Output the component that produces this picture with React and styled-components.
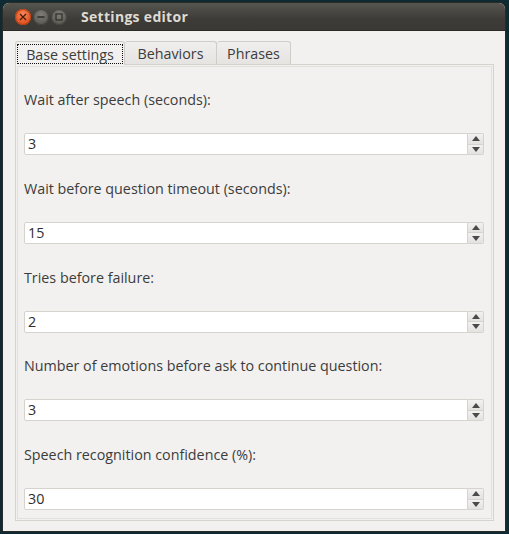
import styled, { createGlobalStyle } from "styled-components";

const GlobalStyle = createGlobalStyle`
  html, body {
    margin: 0;
    padding: 0;
    background: #0f2a32;
  }
  body {
    font-family: "Open Sans", "DejaVu Sans", sans-serif;
  }
`;

const Desktop = styled.div`
  width: 509px;
  height: 534px;
  padding: 3px 4px 0 3px;
  box-sizing: border-box;
`;

const Window = styled.div`
  width: 502px;
  height: 528px;
  display: flex;
  flex-direction: column;
  background: #f2f1f0;
  border-radius: 6px 6px 0 0;
  overflow: hidden;
  box-shadow: 0 0 0 1px #2a2a27;
`;

const TitleBar = styled.div`
  height: 27px;
  flex: none;
  display: flex;
  align-items: center;
  padding-left: 12px;
  background: linear-gradient(#57554f, #3c3b37 60%, #3a3935);
  border-bottom: 1px solid #2c2b28;
`;

const Controls = styled.div`
  display: flex;
  gap: 2px;
  margin-right: 14px;
`;

const ControlButton = styled.div`
  width: 16px;
  height: 16px;
  border-radius: 50%;
  display: flex;
  align-items: center;
  justify-content: center;
  background: ${(p) =>
    p.$close
      ? "radial-gradient(circle at 50% 35%, #f78a5c, #e0501f 70%)"
      : "radial-gradient(circle at 50% 35%, #807d76, #5d5b55 70%)"};
  box-shadow: inset 0 0 0 1px ${(p) => (p.$close ? "#b84215" : "#44423e")};
`;

const Title = styled.span`
  color: #dfdbd2;
  font-size: 14px;
  font-weight: bold;
  letter-spacing: 0.3px;
`;

const Body = styled.div`
  flex: 1;
  display: flex;
  flex-direction: column;
  padding: 10px 11px 10px 12px;
`;

const TabBar = styled.div`
  display: flex;
  height: 23px;
  position: relative;
  z-index: 1;
`;

const Tab = styled.div`
  box-sizing: border-box;
  display: flex;
  align-items: center;
  justify-content: center;
  width: ${(p) => p.$width}px;
  font-size: 14.3px;
  color: #3c3c3c;
  border: 1px solid #d0cdc8;
  border-bottom: none;
  border-left: ${(p) => (p.$first ? "1px solid #d0cdc8" : "none")};
  border-radius: 3px 3px 0 0;
  background: ${(p) =>
    p.$active ? "#f2f1f0" : "linear-gradient(#f0efed, #e6e4e1)"};
  height: ${(p) => (p.$active ? "24px" : "23px")};
`;

const FocusLabel = styled.span`
  flex: 1;
  align-self: stretch;
  margin: 2px 1px 1px 1px;
  border: 1px dotted #111;
  display: flex;
  align-items: center;
  justify-content: center;
`;

const Panel = styled.div`
  flex: 1;
  border: 1px solid #d6d3ce;
  padding: 1px;
  display: flex;
  width: 479px;
  box-sizing: border-box;
`;

const PanelInner = styled.div`
  flex: 1;
  border: 1px solid #e2e0dc;
  display: flex;
  flex-direction: column;
  gap: 23.75px;
  padding: 23px 6px 0 6px;
`;

const Field = styled.div`
  display: flex;
  flex-direction: column;
`;

const Label = styled.div`
  font-size: 14.3px;
  color: #3c3c3c;
  line-height: 20px;
  height: 20px;
  margin-bottom: 23px;
`;

const SpinBox = styled.div`
  display: flex;
  height: 22px;
  width: 460px;
`;

const Input = styled.div`
  flex: 1;
  box-sizing: border-box;
  background: #fff;
  border: 1px solid #d6d3ce;
  border-radius: 2px 0 0 2px;
  font-size: 14.3px;
  color: #2e2e2e;
  padding-left: 3px;
  line-height: 20px;
`;

const Spinner = styled.div`
  width: 16px;
  display: flex;
  flex-direction: column;
  border: 1px solid #d6d3ce;
  border-left: none;
  box-sizing: border-box;
  border-radius: 0 2px 2px 0;
  overflow: hidden;
`;

const SpinButton = styled.div`
  flex: 1;
  display: flex;
  align-items: center;
  justify-content: center;
  background: linear-gradient(#f2f1f0, #e4e2df);
  border-top: ${(p) => (p.$down ? "1px solid #d6d3ce" : "none")};
`;

const Arrow = ({ down }) => (
  <svg width="8" height="5" viewBox="0 0 8 5">
    <path d={down ? "M0 0H8L4 5Z" : "M0 5H8L4 0Z"} fill="#4a4a4a" />
  </svg>
);

const fields = [
  { label: "Wait after speech (seconds):", value: "3" },
  { label: "Wait before question timeout (seconds):", value: "15" },
  { label: "Tries before failure:", value: "2" },
  { label: "Number of emotions before ask to continue question:", value: "3" },
  { label: "Speech recognition confidence (%):", value: "30" },
];

function App() {
  return (
    <Desktop>
      <GlobalStyle />
      <Window>
        <TitleBar>
          <Controls>
            <ControlButton $close>
              <svg width="8" height="8" viewBox="0 0 8 8">
                <path d="M1 1L7 7M7 1L1 7" stroke="#4a1a08" strokeWidth="1.3" />
              </svg>
            </ControlButton>
            <ControlButton>
              <svg width="8" height="8" viewBox="0 0 8 8">
                <path d="M0.5 4H7.5" stroke="#2e2d2a" strokeWidth="1.3" />
              </svg>
            </ControlButton>
            <ControlButton>
              <svg width="8" height="8" viewBox="0 0 8 8">
                <rect x="1" y="1" width="6" height="6" fill="none" stroke="#2e2d2a" strokeWidth="1.2" />
              </svg>
            </ControlButton>
          </Controls>
          <Title>Settings editor</Title>
        </TitleBar>
        <Body>
          <TabBar>
            <Tab $active $first $width={110}>
              <FocusLabel>Base settings</FocusLabel>
            </Tab>
            <Tab $width={92}>Behaviors</Tab>
            <Tab $width={74}>Phrases</Tab>
          </TabBar>
          <Panel>
            <PanelInner>
              {fields.map((f) => (
                <Field key={f.label}>
                  <Label>{f.label}</Label>
                  <SpinBox>
                    <Input>{f.value}</Input>
                    <Spinner>
                      <SpinButton>
                        <Arrow />
                      </SpinButton>
                      <SpinButton $down>
                        <Arrow down />
                      </SpinButton>
                    </Spinner>
                  </SpinBox>
                </Field>
              ))}
            </PanelInner>
          </Panel>
        </Body>
      </Window>
    </Desktop>
  );
}

export default App;
